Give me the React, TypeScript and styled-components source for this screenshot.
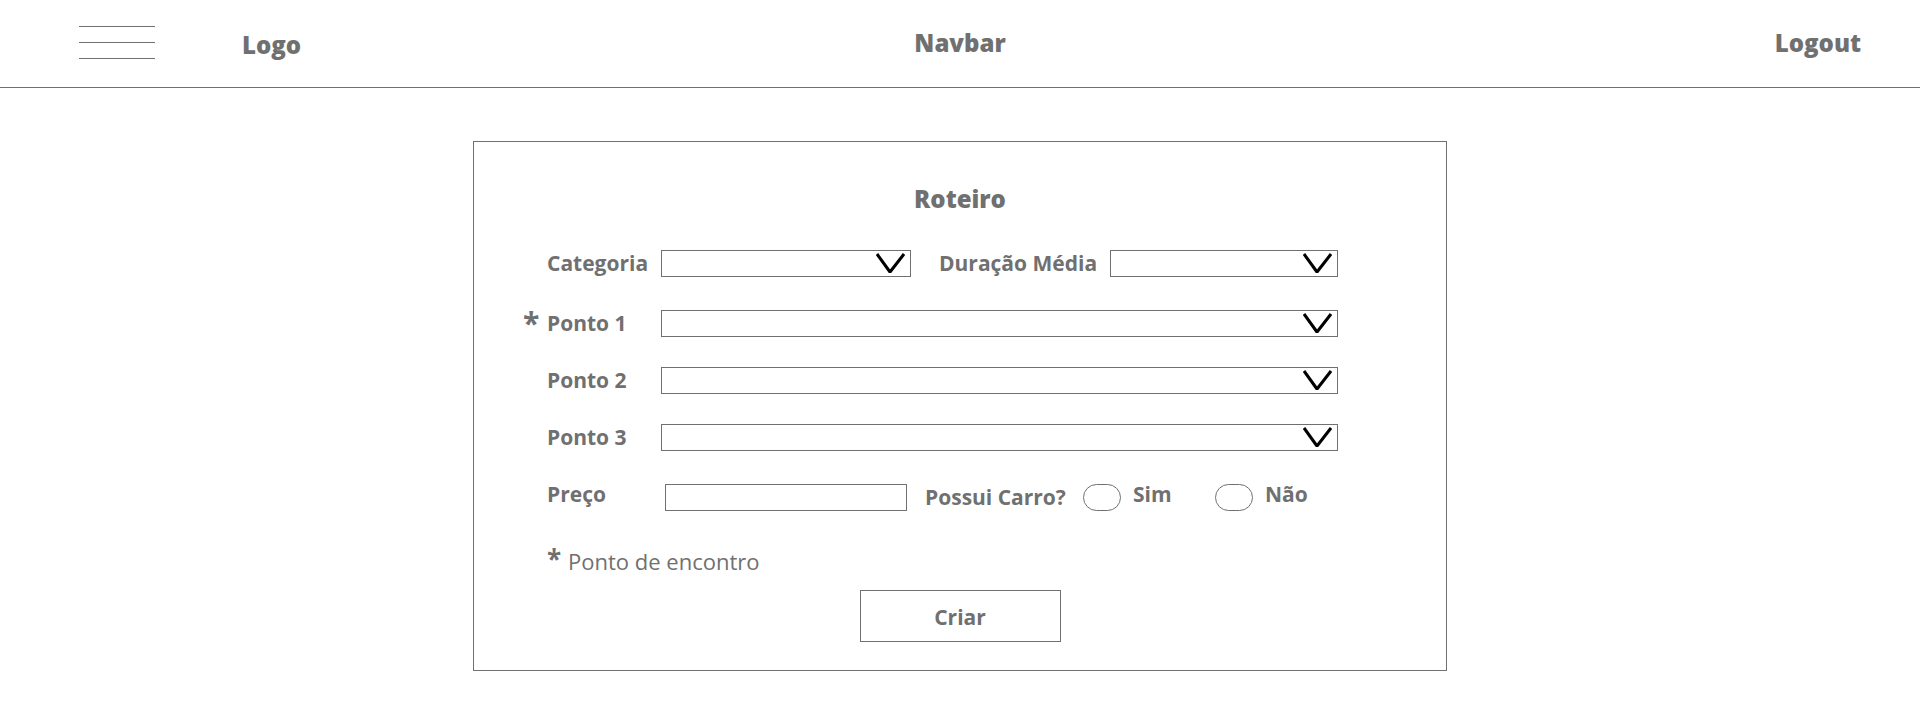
import React from "react";
import styled, { createGlobalStyle } from "styled-components";

const GlobalStyle = createGlobalStyle`
  *, *::before, *::after { box-sizing: border-box; }
  body {
    margin: 0;
    background: #ffffff;
    color: #707070;
    font-family: "Open Sans", "Noto Sans", sans-serif;
    font-size: 21px;
  }
`;

const Navbar = styled.header`
  display: grid;
  grid-template-columns: 1fr auto 1fr;
  align-items: start;
  height: 88px;
  padding: 24px 59px 0;
  border-bottom: 1px solid #707070;
`;

const NavStart = styled.div`
  display: flex;
  align-items: flex-start;
  gap: 87px;
  padding-left: 20px;
`;

const MenuButton = styled.button`
  display: flex;
  flex-direction: column;
  gap: 15px;
  width: 76px;
  padding: 2px 0;
  border: 0;
  background: none;
  cursor: pointer;
`;

const MenuLine = styled.span`
  height: 1px;
  width: 100%;
  background: #707070;
`;

const NavText = styled.span`
  font-size: 24px;
  font-weight: 800;
  line-height: 38px;
`;

const Brand = styled(NavText)`
  padding-top: 2px;
`;

const NavLink = styled.a`
  justify-self: end;
  color: inherit;
  font-size: 24px;
  font-weight: 800;
  line-height: 38px;
  text-decoration: none;
`;

const Card = styled.form`
  width: 100%;
  max-width: 974px;
  margin: 53px auto 48px;
  padding: 38px 0 28px;
  border: 1px solid #707070;
`;

const Title = styled.h1`
  margin: 0 0 32px;
  font-size: 24px;
  font-weight: 800;
  line-height: 38px;
  text-align: center;
`;

const Fields = styled.div`
  display: flex;
  flex-direction: column;
  gap: 30px;
  padding: 0 108px 0 49px;
`;

const Row = styled.div<{ $after?: number }>`
  display: grid;
  grid-template-columns: 24px 114px 1fr;
  align-items: start;
  margin-bottom: ${({ $after = 0 }) => $after}px;
`;

const Label = styled.label`
  grid-column: 2;
  font-weight: 700;
  line-height: 27px;
  white-space: nowrap;
`;

const Marker = styled.span<{ $size: number }>`
  font-size: ${({ $size }) => $size}px;
  font-weight: 700;
  line-height: 25px;
`;

const Pair = styled.div`
  display: grid;
  grid-template-columns: 250fr 199px 228fr;
  align-items: start;
`;

const DurationLabel = styled(Label)`
  grid-column: auto;
  padding-left: 28px;
`;

const SelectBox = styled.div`
  position: relative;
  display: flex;
`;

const Select = styled.select`
  appearance: none;
  width: 100%;
  height: 27px;
  padding: 0 40px 0 8px;
  border: 1px solid #707070;
  border-radius: 0;
  background: #ffffff;
  color: inherit;
  font: inherit;
  font-size: 16px;
`;

const Arrow = styled.svg`
  position: absolute;
  top: 3px;
  right: 6px;
  pointer-events: none;
`;

const PriceRow = styled.div`
  display: flex;
  align-items: flex-start;
  gap: 18px;
  height: 30px;
  padding-left: 4px;
`;

const PriceInput = styled.input`
  align-self: flex-end;
  flex: 0 1 242px;
  min-width: 0;
  height: 27px;
  padding: 0 8px;
  border: 1px solid #707070;
  border-radius: 0;
  color: inherit;
  font: inherit;
  font-size: 16px;
`;

const RadioGroup = styled.div`
  display: flex;
  align-items: flex-start;
  gap: 12px;
  height: 30px;
`;

const Question = styled.span`
  align-self: flex-end;
  width: 146px;
  font-weight: 700;
  line-height: 27px;
  white-space: nowrap;
`;

const Radio = styled.input`
  appearance: none;
  align-self: flex-end;
  flex: none;
  width: 38px;
  height: 27px;
  margin: 0;
  border: 1px solid #707070;
  border-radius: 14px;
  background: #ffffff;

  &:checked {
    background: #707070;
  }
`;

const RadioLabel = styled(Label)`
  min-width: 70px;
`;

const Note = styled.p`
  display: flex;
  align-items: flex-start;
  margin: 36px 0 15px;
  padding-left: 73px;
  font-size: 22px;
  line-height: 28px;
`;

const NoteMarker = styled(Marker)`
  width: 21px;
`;

const Submit = styled.button`
  display: block;
  width: 201px;
  height: 52px;
  margin: 0 auto;
  padding: 2px 0 0;
  border: 1px solid #707070;
  background: #ffffff;
  color: inherit;
  font: inherit;
  font-weight: 700;
  cursor: pointer;
`;

function SelectField({ id }: { id: string }) {
  return (
    <SelectBox>
      <Select id={id} name={id} defaultValue="">
        <option value="" />
      </Select>
      <Arrow width="29" height="20" viewBox="0 0 29 20" aria-hidden="true">
        <path d="M1 1 L14 19 L28 1" fill="none" stroke="#000000" strokeWidth="3" strokeLinejoin="bevel" />
      </Arrow>
    </SelectBox>
  );
}

const stops = [
  { id: "ponto1", label: "Ponto 1", meeting: true },
  { id: "ponto2", label: "Ponto 2", meeting: false },
  { id: "ponto3", label: "Ponto 3", meeting: false },
];

export default function App() {
  return (
    <>
      <GlobalStyle />
      <Navbar>
        <NavStart>
          <MenuButton type="button" aria-label="Menu">
            <MenuLine />
            <MenuLine />
            <MenuLine />
          </MenuButton>
          <Brand>Logo</Brand>
        </NavStart>
        <NavText>Navbar</NavText>
        <NavLink href="#logout">Logout</NavLink>
      </Navbar>
      <main>
        <Card onSubmit={(event: React.FormEvent) => event.preventDefault()}>
          <Title>Roteiro</Title>
          <Fields>
            <Row $after={3}>
              <Label htmlFor="categoria">Categoria</Label>
              <Pair>
                <SelectField id="categoria" />
                <DurationLabel htmlFor="duracao">Duração Média</DurationLabel>
                <SelectField id="duracao" />
              </Pair>
            </Row>
            {stops.map((stop) => (
              <Row key={stop.id}>
                {stop.meeting && <Marker $size={30}>*</Marker>}
                <Label htmlFor={stop.id}>{stop.label}</Label>
                <SelectField id={stop.id} />
              </Row>
            ))}
            <Row>
              <Label htmlFor="preco">Preço</Label>
              <PriceRow>
                <PriceInput id="preco" name="preco" type="text" />
                <RadioGroup role="radiogroup" aria-labelledby="carro">
                  <Question id="carro">Possui Carro?</Question>
                  <Radio type="radio" name="carro" id="sim" value="sim" />
                  <RadioLabel htmlFor="sim">Sim</RadioLabel>
                  <Radio type="radio" name="carro" id="nao" value="nao" />
                  <RadioLabel htmlFor="nao">Não</RadioLabel>
                </RadioGroup>
              </PriceRow>
            </Row>
          </Fields>
          <Note>
            <NoteMarker $size={26}>*</NoteMarker>
            Ponto de encontro
          </Note>
          <Submit type="submit">Criar</Submit>
        </Card>
      </main>
    </>
  );
}
